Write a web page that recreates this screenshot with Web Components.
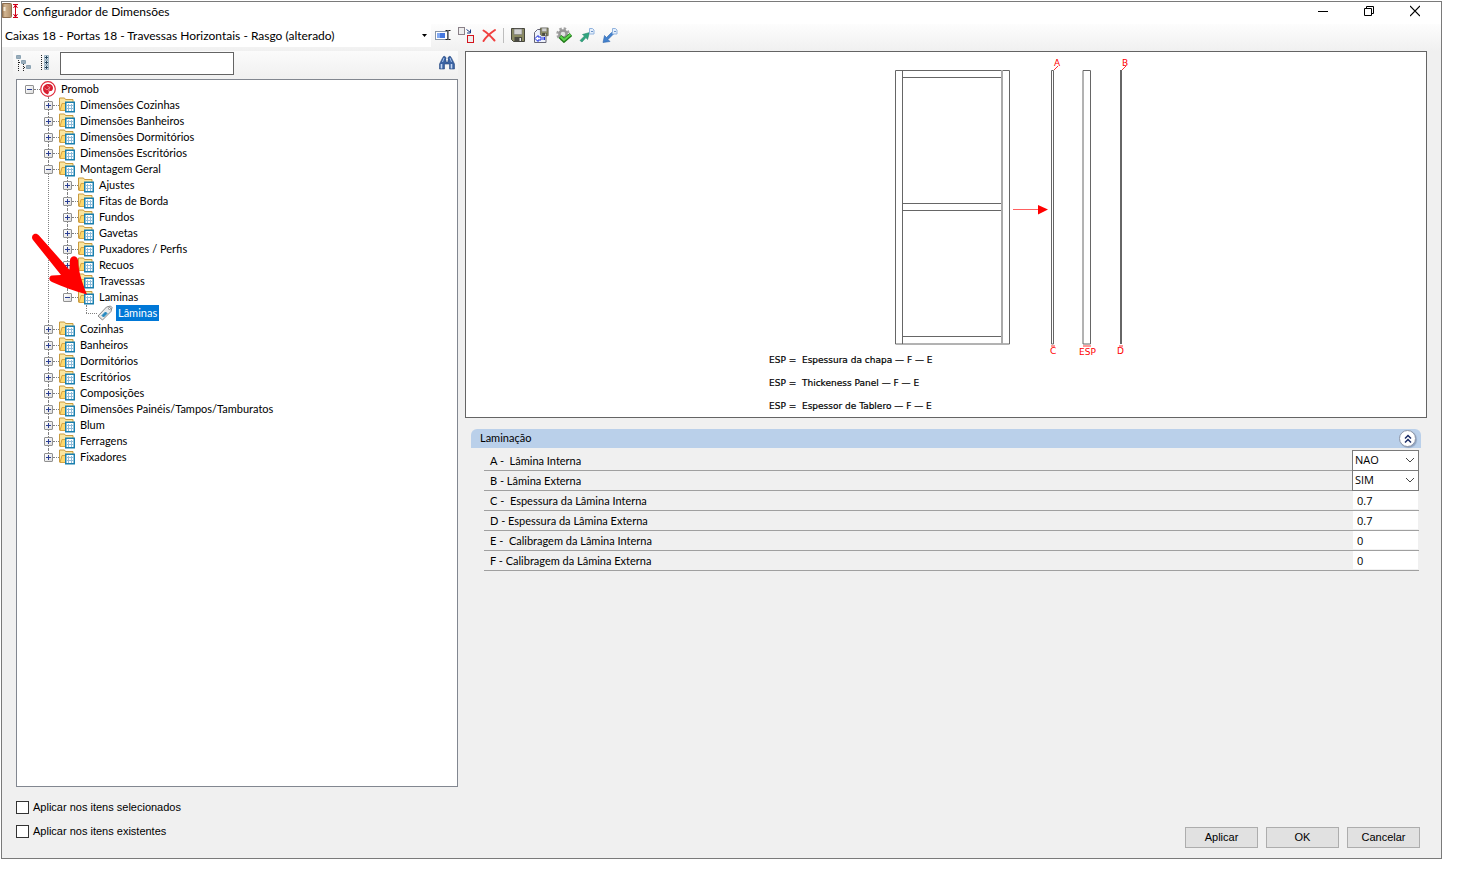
<!DOCTYPE html>
<html lang="pt-BR">
<head>
<meta charset="utf-8">
<title>Configurador de Dimensões</title>
<style>
html{height:100%}
body{margin:0;min-height:100vh;box-sizing:border-box;padding:1px 20px 19px 1px;background:#fff;color:#000;display:flex;
  --ui:"Open Sans","Noto Sans",sans-serif;--caption:Lato,"Open Sans",sans-serif;--sans:"Liberation Sans",Arial,sans-serif;--tree:Lato,"Liberation Sans",sans-serif;
  font:11px/16px var(--sans)}
</style>
</head>
<body>
<app-window>
  <title-bar slot="title">Configurador de Dimensões</title-bar>
  <tool-bar slot="toolbar"></tool-bar>
  <search-bar slot="left"></search-bar>
  <tree-view slot="left">
    <tree-node label="Promob" icon="promob" open>
      <tree-node label="Dimensões Cozinhas"></tree-node>
      <tree-node label="Dimensões Banheiros"></tree-node>
      <tree-node label="Dimensões Dormitórios"></tree-node>
      <tree-node label="Dimensões Escritórios"></tree-node>
      <tree-node label="Montagem Geral" open>
        <tree-node label="Ajustes"></tree-node>
        <tree-node label="Fitas de Borda"></tree-node>
        <tree-node label="Fundos"></tree-node>
        <tree-node label="Gavetas"></tree-node>
        <tree-node label="Puxadores / Perfis"></tree-node>
        <tree-node label="Recuos"></tree-node>
        <tree-node label="Travessas"></tree-node>
        <tree-node label="Laminas" open>
          <tree-node label="Lâminas" icon="tag" leaf selected></tree-node>
        </tree-node>
      </tree-node>
      <tree-node label="Cozinhas"></tree-node>
      <tree-node label="Banheiros"></tree-node>
      <tree-node label="Dormitórios"></tree-node>
      <tree-node label="Escritórios"></tree-node>
      <tree-node label="Composições"></tree-node>
      <tree-node label="Dimensões Painéis/Tampos/Tamburatos"></tree-node>
      <tree-node label="Blum"></tree-node>
      <tree-node label="Ferragens"></tree-node>
      <tree-node label="Fixadores"></tree-node>
    </tree-node>
  </tree-view>
  <check-option slot="left">Aplicar nos itens selecionados</check-option>
  <check-option slot="left">Aplicar nos itens existentes</check-option>
  <panel-drawing slot="right"></panel-drawing>
  <property-group slot="right" heading="Laminação"></property-group>
  <dialog-buttons slot="right"></dialog-buttons>
</app-window>

<script>
function define(name, html, setup) {
  customElements.define(name, class extends HTMLElement {
    constructor() {
      super();
      this.attachShadow({mode: 'open'}).innerHTML = typeof html === 'function' ? html(this) : html;
      if (setup) setup(this);
    }
  });
}
const svg = (body, w = 16, h = 16) => `<svg width="${w}" height="${h}" viewBox="0 0 ${w} ${h}" fill="none" aria-hidden="true">${body}</svg>`;

const floppy = `<path d="M1.500 1.500h13v13h-11l-2-2z" fill="#8a8a62" stroke="#45453c"/><path d="M4 2h8v5.500H4z" fill="#d2d2d2" stroke="#777" stroke-width=".6"/><path d="M4.500 10h7.500v4.500H4.500z" fill="#4a4a42"/><path d="M9.500 11h1.500v3H9.500z" fill="#e4e4e4"/>`;
const page = `<path d="M10.500 1.500h3l1.500 1.500v4h-4.500z" fill="#e5effb" stroke="#91b3de"/><path d="M12 4.500h2" stroke="#6c94ca"/>`;
const icons = {
  door: `<defs><linearGradient id="w"><stop stop-color="#8d6a49"/><stop offset=".3" stop-color="#d3b794"/><stop offset="1" stop-color="#b08d66"/></linearGradient></defs><rect x="0" y="1.500" width="9.500" height="14" rx="1" fill="url(#w)" stroke="#8c6c4e"/><path d="M2.500 5v4" stroke="#f4ead9" stroke-width="2"/><path d="M11 2.500h5M11 15.500h5M13.500 3v12M11.500 6l2-3 2 3M11.500 12l2 3 2-3" stroke="#d00018"/>`,
  rename: `<rect x=".5" y="4.500" width="12" height="8" fill="#fff" stroke="#8795a8"/><rect x="2" y="6" width="8" height="5" fill="#4478e0"/><rect x="2" y="6" width="3" height="5" fill="#83aaf3"/><path d="M10.500 3.500h2l.5.500.5-.5h2M13 4v8M10.500 12.500h2l.5-.5.5.5h2" stroke="#222"/>`,
  swap: `<rect x=".5" y=".5" width="6" height="7" fill="#eee" stroke="#8a8088"/><path d="M8.500 2.500l4 3M12.500 2.500v3.500h-3.500" stroke="#1d3c85"/><rect x="9.500" y="8.500" width="6" height="7" fill="#eee" stroke="#d4141c"/>`,
  remove: `<path d="M2.500 3.500c4 2.500 7.500 6 11 10M14 3C9.500 6 5 10 2.500 14" stroke="#f0403f" stroke-width="2" stroke-linecap="round"/>`,
  save: floppy,
  saveAs: `<path d="M1.500 5.500l3-3H13v13H1.500z" fill="#eef2fb" stroke="#667"/><g transform="translate(6.500 0) scale(.6)">${floppy}</g><path d="M2 11.500l3-3v1.500h3v3H5v1.500z" fill="#fff" stroke="#1a2de0"/><path d="M9.500 11.500h2.500" stroke="#1a2de0" stroke-width="3" stroke-dasharray="1 .5"/>`,
  gear: `<circle cx="7" cy="7" r="5.500" stroke="#a2a2a2" stroke-width="2.500" stroke-dasharray="2.400 1.920"/><circle cx="7" cy="7" r="3.600" fill="#e3e3e3" stroke="#979797" stroke-width="2.500"/><path d="M4 9.500l4 4 7-6" stroke="#237c1b" stroke-width="4"/><path d="M4.500 9.500L8 13l6.500-5.500" stroke="#5fd650" stroke-width="2"/>`,
  exportIt: `<path d="M1 13.500L5.500 9 3.500 7.500 10.500 5.500 8.500 12.500 7 10.500 3 15z" fill="#2fa57f" stroke="#26886a" stroke-width=".6"/>${page}`,
  importIt: `<path d="M1 15.500l1.500-7 2 2 5-5 2 1.500-5.500 5.500 2 2z" fill="#4482cd" stroke="#2e64ad" stroke-width=".6"/>${page}`,
  collapse: `<path d="M2.500 5v11M7.500 9v7" stroke="#222" stroke-dasharray="1 1"/><path d="M3 7.500h3M8 12.500h3" stroke="#222" stroke-dasharray="1 1"/><path d="M.5.500h4v3h-4zM5.500 5.500h4v3h-4zM10.500 10.500h4v3h-4z" fill="#eef6fc" stroke="#8ba3b3"/><path d="M1 2h3M6 7h3M11 12h3" stroke="#48657b"/>`,
  expand: `<path d="M3.500 0v16" stroke="#222" stroke-dasharray="1 1"/><path d="M6.500.5h4v4h-4zM6.500 5.500h4v4h-4zM6.500 10.500h4v4h-4z" fill="#d9eaf5" stroke="#9bb2c1"/><path d="M7 2.500h3M8.500 1v3M7 7.500h3M8.500 6v3M7 12.500h3M8.500 11v3" stroke="#27455c"/>`,
  find: `<path d="M3.500 3L5 1l2 1.500V7h2V2.500L11 1l1.500 2L15.500 9v5h-5V9h-5v5h-5V9z" fill="#3a62a2" stroke="#284a82" stroke-width=".6"/><path d="M2.500 9v4.500M12.500 9v4.500" stroke="#c3d7f4" stroke-width="1.600"/><path d="M5 3l-1.500 4M11 3l1.500 4" stroke="#a5c1ec"/><path d="M7 4.500h2" stroke="#e8f0fb"/>`,
  promob: `<circle cx="8" cy="8" r="7.300" fill="#fff" stroke="#e02a3a" stroke-width="1.200"/><path d="M8.500 3c3 0 4.500 1.800 4.500 4s-1.500 3.500-3.500 3L8 13.500C5 13 3 10.800 3 8c0-3 2.300-5 5.500-5z" fill="#d81e30"/><path d="M7 4.500l2.500 2-2.500 2.500M10 5.500l-1.500 5M4.500 7l2.500 2" stroke="#f7bcc2" stroke-width=".6"/>`,
  folder: `<path d="M.5 13v-12h5l1 1.500h7.500v10.500z" fill="#fbe5a0" stroke="#c99b3f"/><path d="M1 13.500l2-7h12l-2 7z" fill="#ffd76b" stroke="#d6a544"/><rect x="6.750" y="5.250" width="8.500" height="9.500" fill="#fff" stroke="#1a7fae" stroke-width="1.500"/><path d="M9.500 7v7M12.500 7v7M8 8.500h6M8 11.500h6" stroke="#8fbcda"/>`,
  tag: `<path d="M1 11L9.500 2l4-1 1.500 1.500-1 4L5.500 15z" fill="#e9eaeb" stroke="#888"/><path d="M5 10.500l3.500-3.500 1.500 1.500-3.500 3.500z" fill="#2688bf" stroke="#2688bf"/><circle cx="12.500" cy="3.500" r="1" fill="#fff" stroke="#888"/>`
};

define('app-window', `
<style>
:host{flex:1;min-width:0;display:flex;flex-direction:column;box-sizing:border-box;border:1px solid #7a7a7a;background:#f0f0f0}
main{flex:1;display:flex}
.left{flex:0 0 456px;display:flex;flex-direction:column;padding:0 0 19px 14px;box-sizing:border-box;margin-right:7px}
.right{flex:1;min-width:0;display:flex;flex-direction:column;padding:0 14px 10px 0}
</style>
<slot name="title"></slot><slot name="toolbar"></slot>
<main><div class="left"><slot name="left"></slot></div><div class="right"><slot name="right"></slot></div></main>`);

define('title-bar', `
<style>
:host{display:flex;height:22px;background:#fff;font:12px/20px var(--caption);align-items:flex-start}
.name{flex:1;padding-left:5px}
button{border:0;background:none;width:46px;height:18px;padding:0;display:grid;place-items:center}
button:last-child{margin-right:3px}
</style>
${svg(icons.door)}<span class="name"><slot></slot></span>
<button aria-label="Minimizar">${svg('<path d="M0 6.500h10" stroke="#000"/>', 10, 12)}</button>
<button aria-label="Restaurar">${svg('<path d="M.5 3.500h7v7h-7zM2.500 3V1.500h7v7H8" stroke="#000"/>', 10, 12)}</button>
<button aria-label="Fechar">${svg('<path d="M0 1l10 10M10 1L0 11" stroke="#000" stroke-width="1.200"/>', 10, 12)}</button>`);

const tool = (name, label) => `<button aria-label="${label}" title="${label}">${svg(icons[name])}</button>`;
define('tool-bar', `
<style>
:host{display:flex;height:27px;background:linear-gradient(#fdfdfd,#f0f0f0)}
.combo{flex:0 0 429px;position:relative;height:23px}
select{appearance:none;width:100%;height:23px;border:0;padding:0 16px 0 3px;background:#fff;font:12px/23px var(--caption);color:#000}
.combo svg{position:absolute;right:4px;top:10px}
button{border:0;background:none;width:23px;height:22px;padding:0;display:grid;place-items:center}
hr{width:1px;height:15px;border:0;margin:4px 2px 0 3px;background:#bdbdbd}
</style>
<span class="combo"><select aria-label="Configuração"><option>Caixas 18 - Portas 18 - Travessas Horizontais - Rasgo (alterado)</option></select>${svg('<path d="M0 0h5L2.500 3z" fill="#000"/>', 5, 3)}</span>
${tool('rename', 'Renomear')}${tool('swap', 'Substituir')}${tool('remove', 'Excluir')}<hr>
${tool('save', 'Salvar')}${tool('saveAs', 'Salvar como')}${tool('gear', 'Validar')}${tool('exportIt', 'Exportar')}${tool('importIt', 'Importar')}`);

define('search-bar', `
<style>
:host{display:flex;height:28px;align-items:flex-start;margin-left:-3px;background:linear-gradient(#fbfbfb,#f0f0f0)}
button{border:0;background:none;width:22px;height:24px;padding:0;display:grid;place-items:center}
input{width:174px;height:23px;box-sizing:border-box;border:1px solid #646464;background:#fff;margin:1px auto 0 3px;padding:0 3px;font:11px var(--sans)}
</style>
${tool('collapse', 'Recolher tudo')}${tool('expand', 'Expandir tudo')}<input type="text" aria-label="Pesquisar">${tool('find', 'Localizar')}`);

define('tree-view', `
<style>
:host{display:block;flex:1;position:relative;background:#fff;border:1px solid #828790;padding:1px 8px;margin-bottom:12px;font:11px/16px var(--tree)}
.pointer{position:absolute;left:14px;top:152px}
</style>
<slot></slot>
<svg class="pointer" width="60" height="66" viewBox="0 0 60 66" aria-hidden="true"><path d="M1.500 3.500C3 1 6 1 8 3.500L38.500 38 39 28c1-5 7-5 8 0 .5 12 4 22 9 34.500C43 59 32 55 21 50c-4-2-3-6 0-6.500l9-.5L2 8C.8 6.500.8 5 1.500 3.500z" fill="#f00"/></svg>`);

define('tree-node', el => {
  const leaf = el.hasAttribute('leaf'), open = el.hasAttribute('open');
  return `
<style>
:host{display:block;position:relative}
.row{display:flex;align-items:center;height:16px}
.stem{position:absolute;left:4px;top:0;bottom:0;border-left:1px dotted #808080}
:host(:last-of-type) .stem{bottom:auto;height:8px}
:host([icon=promob]) .stem{display:none}
button{position:relative;width:9px;height:9px;padding:0;border:1px solid #919191;border-radius:1px;background:linear-gradient(135deg,#fff,#dedede);display:grid;place-items:center}
.dots{width:6px;border-top:1px dotted #808080}
.leaf{width:11px;margin-left:4px}
.row svg{position:relative;flex:none}
.label{margin-left:3px;padding:0 2px;white-space:nowrap}
:host([selected]) .label{background:#0078d7;color:#fff}
.kids{margin-left:19px}
</style>
<span class="stem"></span>
<div class="row">${leaf ? '<span class="dots leaf"></span>' : `<button aria-label="${open ? 'Recolher' : 'Expandir'}">${svg(`<path d="M1 3.500h5${open ? '' : 'M3.500 1v5'}" stroke="#2b3f94"/>`, 7, 7)}</button><span class="dots"></span>`}${svg(icons[el.getAttribute('icon') || 'folder'])}<span class="label">${el.getAttribute('label')}</span></div>
<div class="kids"><slot></slot></div>`;
});

define('check-option', `
<style>
:host{display:block;height:24px;line-height:16px}
label{display:flex;align-items:center;gap:4px}
input{appearance:none;width:13px;height:13px;margin:0;border:1px solid #333;background:#fff}
:host(:last-of-type){height:16px}
</style>
<label><input type="checkbox"><slot></slot></label>`);

define('panel-drawing', `
<style>
:host{display:flex;justify-content:center;box-sizing:border-box;height:367px;border:1px solid #646464;background:#fff;overflow:hidden}
text{font:9px "DejaVu Sans",sans-serif;fill:#000;white-space:pre}
.note{stroke:#000;stroke-width:.2}
.red{fill:#f00}
</style>
<svg width="370" height="365" viewBox="761 52 370 365" fill="none" stroke="none">
<g stroke="#666">
<path d="M895.500 70.500h114v273.500h-114zM902.500 70v274M902 77.500h100M902 203.500h100M902 210.500h100M902 336.500h100"/>
<path d="M1002 70v274" stroke="#aaa" stroke-width="2"/>
<path d="M1051.500 70.500h2v273.500h-2z"/><path d="M1083 70.500h7.500v273.500H1083z"/><path d="M1121 70v274" stroke-width="2"/>
</g>
<path d="M1013 209.500h26" stroke="#ff6060"/><path d="M1038 205l10 4.500-10 5z" fill="#f00"/>
<path d="M1054 70l4-4M1122 70l4-4M1051 346h4M1083 346h8M1119 346h4" stroke="#f33"/>
<g class="red"><text x="1054" y="66">A</text><text x="1122" y="66">B</text>
<text x="1050" y="354">C</text><text x="1079" y="355">ESP</text><text x="1117" y="354">D</text></g>
<g class="note"><text x="769" y="363">ESP =  Espessura da chapa — F — E</text>
<text x="769" y="386">ESP =  Thickeness Panel — F — E</text>
<text x="769" y="409">ESP =  Espessor de Tablero — F — E</text></g>
</svg>`.replace('.red{', '.red text{'));

const rows = [
  ['A -  Lâmina Interna', 'NAO', ['NAO', 'SIM']],
  ['B - Lâmina Externa', 'SIM', ['NAO', 'SIM']],
  ['C -  Espessura da Lâmina Interna', '0.7'],
  ['D - Espessura da Lâmina Externa', '0.7'],
  ['E -  Calibragem da Lâmina Interna', '0'],
  ['F - Calibragem da Lâmina Externa', '0']
];
define('property-group', el => `
<style>
:host{display:block;margin:11px 6px 0;font:11px/19px var(--tree)}
header{display:flex;align-items:center;justify-content:space-between;height:19px;padding:0 5px 0 9px;background:#bad0ea;border-radius:6px 6px 0 0;line-height:17px}
header span{align-self:flex-start}
header button{width:17px;height:17px;padding:0;border:1px solid #8d96a8;border-radius:50%;background:#fff;display:grid;place-items:center;box-shadow:1px 1px 1px #8fa3c0}
.body{padding:3px 2px 0 13px}
table{width:100%;border-collapse:separate;border-spacing:0}
th,td{height:19px;padding:0;border-bottom:1px solid #a0a0a0;font-weight:normal;text-align:left}
th{padding-left:6px;white-space:pre}
td{width:67px;font:11px var(--ui)}
.box{display:block;position:relative}
.box svg{position:absolute;right:5px;top:8px}
select{appearance:none;display:block;box-sizing:border-box;width:67px;height:21px;margin:-1px 0;padding:0 16px 2px 2px;border:1px solid #7a7a7a;border-radius:0;background:#fff;font:11px var(--ui);color:#000}
input{display:block;box-sizing:border-box;width:65px;height:18px;margin:0 1px 1px;padding:0 4px;border:0;background:#fff;font:11px var(--ui)}
</style>
<header><span>${el.getAttribute('heading')}</span><button aria-label="Recolher grupo">${svg('<path d="M1 4.500l3-3 3 3M1 8.500l3-3 3 3" stroke="#1c2c66" stroke-width="1.500"/>', 8, 10)}</button></header>
<div class="body"><table>${rows.map(([name, value, options], i) => `<tr><th scope="row"><label for="v${i}">${name}</label></th><td>${options
  ? `<span class="box"><select id="v${i}">${options.map(o => `<option${o === value ? ' selected' : ''}>${o}</option>`).join('')}</select>${svg('<path d="M0 0l4 4 4-4" stroke="#444"/>', 8, 5)}</span>`
  : `<input id="v${i}" type="text" value="${value}">`}</td></tr>`).join('')}</table></div>`);

define('dialog-buttons', `
<style>
:host{display:flex;justify-content:flex-end;gap:8px;margin-top:auto;padding-right:7px}
button{width:73px;height:21px;padding:0 0 2px;border:1px solid #adadad;border-radius:0;background:#e1e1e1;font:11px/16px var(--sans);color:#000}
</style>
<button>Aplicar</button><button>OK</button><button>Cancelar</button>`);
</script>
</body>
</html>
